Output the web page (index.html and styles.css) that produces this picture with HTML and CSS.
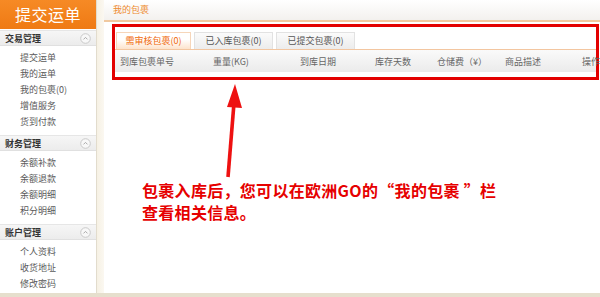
FILE: index.html
```html
<!DOCTYPE html>
<html lang="zh-CN">
<head>
    <meta charset="UTF-8">
    <title>我的包裹</title>
    <link rel="stylesheet" href="styles.css">
</head>
<body>
    <div class="page">
        <div class="sidebar">
            <div class="logo">提交运单</div>

            <div class="menu-head">
                <span>交易管理</span>
                <svg class="fold" width="11" height="11" viewBox="0 0 11 11"><circle cx="5.5" cy="5.5" r="4.8" fill="#f8f8f8" stroke="#c9c9c9"/><polyline points="3.5,6.4 5.5,4.4 7.5,6.4" fill="none" stroke="#aaa" stroke-width="1"/></svg>
            </div>
            <ul class="menu">
                <li>提交运单</li>
                <li>我的运单</li>
                <li>我的包裹(0)</li>
                <li>增值服务</li>
                <li>货到付款</li>
            </ul>

            <div class="menu-head">
                <span>财务管理</span>
                <svg class="fold" width="11" height="11" viewBox="0 0 11 11"><circle cx="5.5" cy="5.5" r="4.8" fill="#f8f8f8" stroke="#c9c9c9"/><polyline points="3.5,6.4 5.5,4.4 7.5,6.4" fill="none" stroke="#aaa" stroke-width="1"/></svg>
            </div>
            <ul class="menu">
                <li>余额补款</li>
                <li>余额退款</li>
                <li>余额明细</li>
                <li>积分明细</li>
            </ul>

            <div class="menu-head">
                <span>账户管理</span>
                <svg class="fold" width="11" height="11" viewBox="0 0 11 11"><circle cx="5.5" cy="5.5" r="4.8" fill="#f8f8f8" stroke="#c9c9c9"/><polyline points="3.5,6.4 5.5,4.4 7.5,6.4" fill="none" stroke="#aaa" stroke-width="1"/></svg>
            </div>
            <ul class="menu">
                <li>个人资料</li>
                <li>收货地址</li>
                <li>修改密码</li>
            </ul>
        </div>
        <div class="gutter"></div>

        <div class="main">
            <div class="crumb">我的包裹</div>

            <!-- red annotation frame around the tab panel -->
            <div class="highlight">
                <div class="tabs">
                    <div class="tab active">需审核包裹(0)</div>
                    <div class="tab">已入库包裹(0)</div>
                    <div class="tab">已提交包裹(0)</div>
                </div>
                <div class="cols">
                    <span>到库包裹单号</span>
                    <span>重量(KG)</span>
                    <span>到库日期</span>
                    <span>库存天数</span>
                    <span>仓储费（¥）</span>
                    <span>商品描述</span>
                    <span>操作</span>
                </div>
            </div>

            <div class="note">
                <svg class="arrow" width="24" height="96" viewBox="0 0 24 96">
                    <line x1="6" y1="94" x2="12" y2="20" stroke="#ee1111" stroke-width="3.6"/>
                    <polygon points="13,1 20,25 5,24" fill="#ee1111"/>
                </svg>
                <p>包裹入库后，您可以在欧洲GO的“我的包裹 ”栏<br>查看相关信息。</p>
            </div>
        </div>
    </div>
    <div class="footer-bar"></div>
</body>
</html>
```

FILE: styles.css
```css
body {
    margin: 0;
    width: 600px;
    height: 297px;
    overflow: hidden;
    background: #ffffff;
    font-family: "Noto Sans CJK SC", "Liberation Sans", sans-serif;
}
.page {
    display: flex;
    height: 293px;
}
.sidebar {
    width: 96px;
    flex: none;
    border-right: 1px solid #e2dccd;
    background: #ffffff;
}
.gutter {
    width: 7px;
    flex: none;
    background: linear-gradient(to right, #f6f1e4, #fbf8f1);
}
.logo {
    height: 29px;
    margin-bottom: 1px;
    background: linear-gradient(#f68a25, #ef7a14);
    color: #ffffff;
    font-size: 16px;
    line-height: 29px;
    text-align: center;
    letter-spacing: 0.5px;
}
.menu-head {
    display: flex;
    justify-content: space-between;
    align-items: center;
    height: 14px;
    padding: 0 5px 0 5px;
    background: linear-gradient(#f6f6f6, #ececec);
    border-top: 1px solid #e6e6e6;
    border-bottom: 1px solid #e0e0e0;
    color: #333;
    font-size: 9px;
    font-weight: bold;
}
.fold {
    display: block;
}
.menu {
    list-style: none;
    margin: 0;
    padding: 4px 0 5px 20px;
}
.menu li {
    height: 16px;
    line-height: 16px;
    font-size: 9px;
    color: #5a5a5a;
}
.main {
    flex: 1;
    min-width: 0;
}
.crumb {
    height: 20px;
    line-height: 20px;
    padding-left: 9px;
    background: linear-gradient(#ffffff, #f3f1ee);
    border-bottom: 2px solid #f0c9a0;
    color: #ee8a2e;
    font-size: 9px;
}
.highlight {
    margin: 2px 1px 0 8px;
    border: 3px solid #e30000;
    padding: 5px 0 5px 0;
}
.tabs {
    display: flex;
    gap: 3px;
    padding-left: 1px;
    border-bottom: 1px solid #f3c6a0;
}
.tab {
    width: 77px;
    height: 16px;
    line-height: 16px;
    text-align: center;
    font-size: 9px;
    color: #555;
    background: linear-gradient(#fbfbfb, #ececec);
    border: 1px solid #e2e2e2;
    border-bottom: none;
}
.tab.active {
    width: 73px;
    color: #f0690a;
    background: linear-gradient(#ffffff 40%, #fde3cc);
    border-color: #f6d6ba;
}
.cols {
    display: grid;
    grid-template-columns: 93px 87px 75px 62px 68px 77px 1fr;
    height: 22px;
    align-items: center;
    padding-left: 5px;
    background: linear-gradient(#fafafa, #ebebeb);
    font-size: 9px;
    color: #666;
    white-space: nowrap;
}
.note {
    padding: 3px 0 0 38px;
}
.arrow {
    display: block;
    margin-left: 80px;
}
.note p {
    margin: 0;
    line-height: 22px;
    font-size: 16px;
    font-weight: bold;
    letter-spacing: 0.3px;
    color: #e60000;
}
.footer-bar {
    height: 4px;
    background: #e6dfcd;
}
```
